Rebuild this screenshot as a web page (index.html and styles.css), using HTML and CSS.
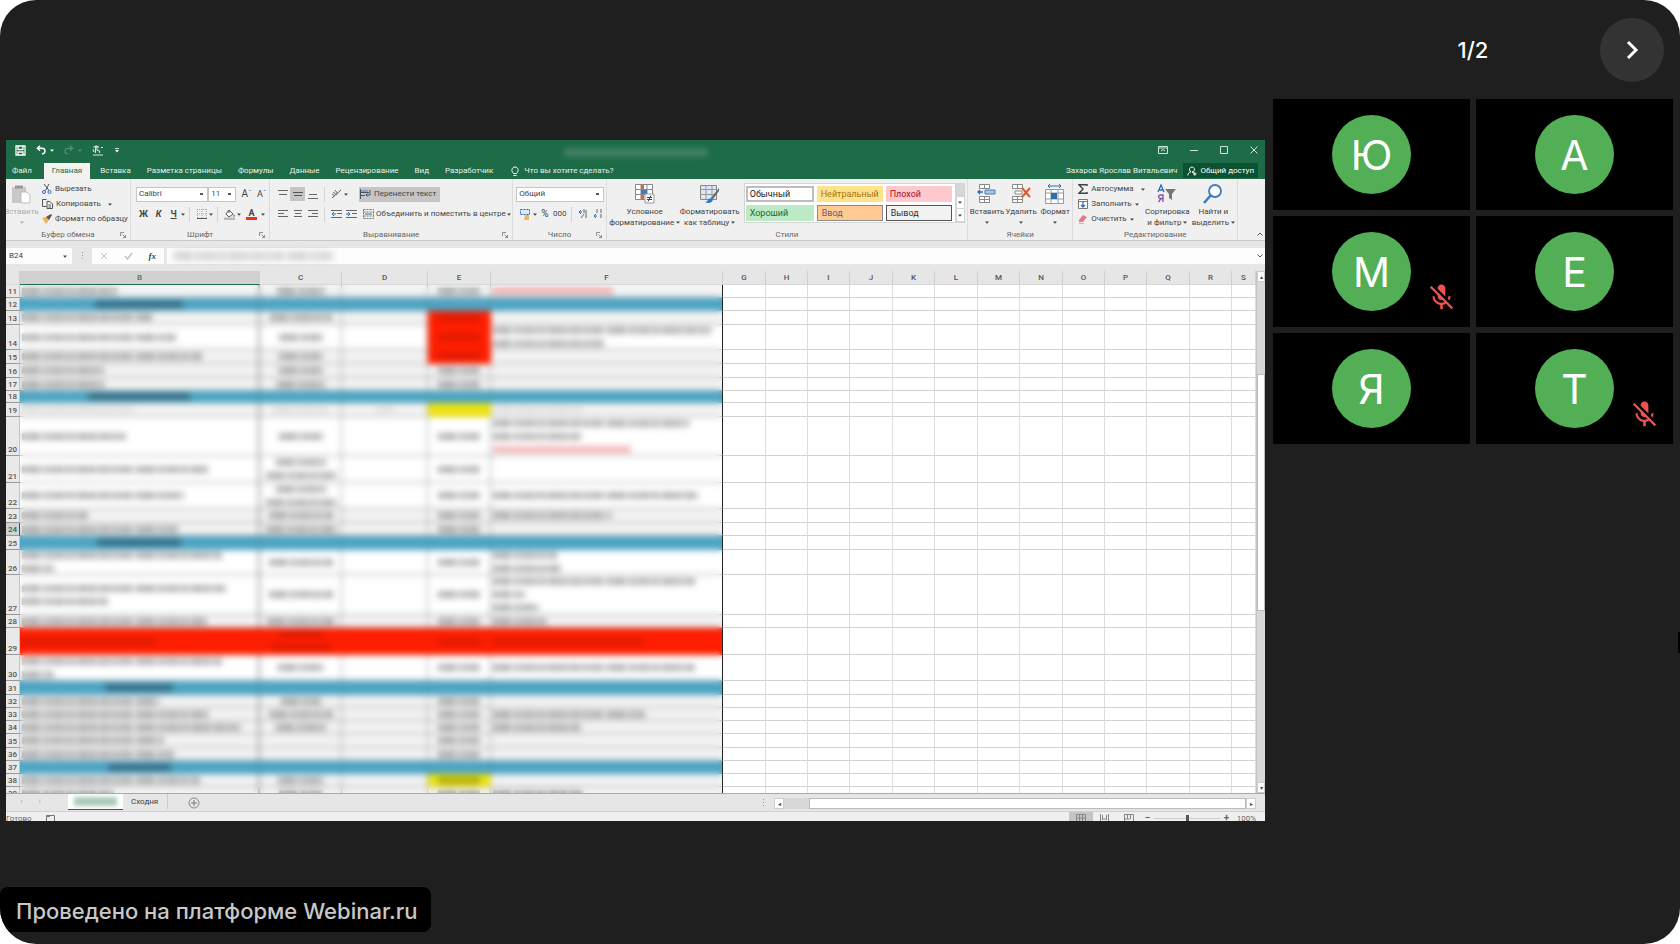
FILE: index.html
```
<!DOCTYPE html>
<html lang="ru">
<head>
<meta charset="utf-8">
<title>Webinar.ru</title>
<link rel="stylesheet" href="styles.css">
</head>
<body>
<svg class="defs" aria-hidden="true">
  <symbol id="mic-off" viewBox="0 0 24 24"><path d="M19 11h-1.7c0 .74-.16 1.43-.43 2.05l1.23 1.23c.56-.98.9-2.09.9-3.28zm-4.02.17c0-.06.02-.11.02-.17V5c0-1.66-1.34-3-3-3S9 3.34 9 5v.18l5.98 5.99zM4.27 3L3 4.27l6.01 6.01V11c0 1.66 1.33 3 2.99 3 .22 0 .44-.03.65-.08l1.66 1.66c-.71.33-1.5.52-2.31.52-2.76 0-5.3-2.1-5.3-5.1H5c0 3.41 2.72 6.23 6 6.72V21h2v-3.28c.91-.13 1.77-.45 2.54-.9L19.73 21 21 19.73 4.27 3z" fill="#f0524f"/></symbol>
  <symbol id="caret" viewBox="0 0 4 3"><path d="M0 .5h4L2 2.7z" fill="currentColor"/></symbol>
  <symbol id="launcher" viewBox="0 0 6 6"><path d="M.5 4V.5H4M2.500 2.500l3 3M5.500 3v2.500H3" fill="none" stroke="#777" stroke-width=".8"/></symbol>
</svg>
<div class="room">
  <header class="pager">
    <span></span>
    <span class="pager-count">1/2</span>
    <button class="pager-next" aria-label="Следующая страница"><svg width="14" height="20" viewBox="0 0 14 20"><path d="M3 2l8 8-8 8" fill="none" stroke="#fff" stroke-width="3"/></svg></button>
  </header>
  <main class="stage">
    <section class="share" aria-label="Демонстрация экрана">
      <div class="titlebar">
        <div class="quick">
          <button aria-label="Сохранить"><svg width="11" height="11" viewBox="0 0 11 11"><path d="M1 1h9v9H1zM3 1v3.500h5V1M3 10V7h5v3" fill="none" stroke="#fff" stroke-width="1.300"/></svg></button>
          <button class="wide" aria-label="Отменить"><svg width="10" height="10" viewBox="0 0 10 10"><path d="M4 .8L1.300 3.300 4 5.800M1.500 3.300H6c4 0 4 5.500 0 5.700" fill="none" stroke="#fff" stroke-width="1.400"/></svg><svg class="caret"><use href="#caret"/></svg></button>
          <button class="wide dim" aria-label="Вернуть"><svg width="10" height="10" viewBox="0 0 10 10"><path d="M6 .8l2.700 2.500L6 5.800M8.500 3.300H4c-4 0-4 5.500 0 5.700" fill="none" stroke="#fff" stroke-width="1.200"/></svg><svg class="caret"><use href="#caret"/></svg></button>
          <button class="wide" aria-label="Режим управления"><svg width="12" height="11" viewBox="0 0 12 11"><path d="M2 7L1 4.500M3.500 8V2.500c0-1 1.500-1 1.500 0V5l2.500 1v2M1 10h10M1.500 2.500C2.500.5 6 .5 7 2.500M9 2.500h2" fill="none" stroke="#d5e8dd" stroke-width="1.100"/></svg></button>
          <button aria-label="Настройка панели"><svg width="6" height="6" viewBox="0 0 6 6"><path d="M1 1.500h4" stroke="#fff" stroke-width=".8"/><path d="M1 3h4L3 5.500z" fill="#fff"/></svg></button>
        </div>
        <div class="doc-title"><i class="ink ink-light"></i></div>
        <div class="window-buttons">
          <button aria-label="Параметры ленты"><svg width="10" height="8" viewBox="0 0 10 8"><path d="M.5.5h9v7h-9zM1 2h8M3 5l2-1.500L7 5" fill="none" stroke="#cfe3d8"/></svg></button>
          <button aria-label="Свернуть"><svg width="8" height="8" viewBox="0 0 8 8"><path d="M0 4.500h8" stroke="#cfe3d8"/></svg></button>
          <button aria-label="Развернуть"><svg width="8" height="8" viewBox="0 0 8 8"><path d="M.5.5h7v7h-7z" fill="none" stroke="#cfe3d8"/></svg></button>
          <button aria-label="Закрыть"><svg width="8" height="8" viewBox="0 0 8 8"><path d="M.5.5l7 7M7.500.5l-7 7" stroke="#cfe3d8"/></svg></button>
        </div>
      </div>
      <nav class="tabs">
        <button>Файл</button><button class="active">Главная</button><button>Вставка</button><button>Разметка страницы</button><button>Формулы</button><button>Данные</button><button>Рецензирование</button><button>Вид</button><button>Разработчик</button>
        <button class="tell"><svg width="8" height="11" viewBox="0 0 8 11"><path d="M2.500 7.500C0 5.500.5 1 4 1s4 4.500 1.500 6.500zM2.500 9.500h3" fill="none" stroke="#fff"/></svg>Что вы хотите сделать?</button>
        <span class="user">Захаров Ярослав Витальевич</span>
        <button class="share-button"><svg width="10" height="10" viewBox="0 0 10 10"><path d="M5 6a2.500 2.500 0 1 0-1-.2C2 6.300 1 7.500.8 9.500M5 6l2 1M6 8h3.500M7.800 6.300v3.400" fill="none" stroke="#fff"/></svg>Общий доступ</button>
      </nav>
      <div class="ribbon">
        <div class="group g-clip">
          <div class="tools">
            <button class="big cut muted"><svg width="19" height="20" viewBox="0 0 19 20"><path d="M0 3h14v16H0z" fill="#c9c7c8"/><path d="M3 1.500h8v3H3z" fill="#999"/><path d="M9 8h6l3 3v8H9z" fill="#fff" stroke="#bbb"/></svg>Вставить<svg class="caret"><use href="#caret"/></svg></button>
            <div class="stack">
              <button><svg width="10" height="10" viewBox="0 0 10 10"><path d="M2 0l5 6.500M7 0L3.500 6.500" stroke="#555"/><circle cx="2" cy="8" r="1.500" fill="none" stroke="#2b6cb5"/><circle cx="7.500" cy="8" r="1.500" fill="none" stroke="#2b6cb5"/></svg>Вырезать</button>
              <button><svg width="11" height="10" viewBox="0 0 11 10"><path d="M4.500 7.500h-4v-7h4M5 2.500h3l2.500 2.500v4.500H5zM6.500 6H9M6.500 8H9" fill="none" stroke="#555"/></svg>Копировать<svg class="caret gap"><use href="#caret"/></svg></button>
              <button><svg width="10" height="10" viewBox="0 0 10 10"><path d="M0 4l4-1 3 3-3 4z" fill="#efb45a"/><path d="M4 3l5-3 1 1-3 5z" fill="#555"/></svg>Формат по образцу</button>
            </div>
          </div>
          <div class="caption">Буфер обмена<svg class="launch"><use href="#launcher"/></svg></div>
        </div>
        <div class="group g-font">
          <div class="tools rows">
            <div class="line">
              <select class="font-name" aria-label="Шрифт"><option>Calibri</option></select><select class="font-size" aria-label="Размер"><option>11</option></select>
              <button class="letter">A<sup>ˆ</sup></button><button class="letter small">A<sup>ˇ</sup></button>
            </div>
            <div class="line">
              <button class="bold">Ж</button><button class="italic">К</button><button class="under">Ч</button><svg class="caret"><use href="#caret"/></svg><i class="bar"></i>
              <button aria-label="Границы"><svg width="10" height="10" viewBox="0 0 10 10"><path d="M.5 0v9M5 0v9M9.500 0v9M0 .5h10M0 5h10" stroke="#aaa" stroke-dasharray="1 1"/><path d="M0 9.500h10" stroke="#555"/></svg></button><svg class="caret"><use href="#caret"/></svg><i class="bar"></i>
              <button aria-label="Заливка"><svg width="12" height="11" viewBox="0 0 12 11"><path d="M5 1l4 4-4 3-3-3zM5 1V4" fill="#fff" stroke="#555"/><path d="M10 5l1 2.500h-2z" fill="#2b6cb5"/><path d="M0 8.500h11V11H0z" fill="#bbb"/></svg></button><svg class="caret"><use href="#caret"/></svg>
              <button class="font-color" aria-label="Цвет текста">A</button><svg class="caret"><use href="#caret"/></svg>
            </div>
          </div>
          <div class="caption">Шрифт<svg class="launch"><use href="#launcher"/></svg></div>
        </div>
        <div class="group g-align">
          <div class="tools rows">
            <div class="line">
              <button class="al" aria-label="По верхнему краю"><svg width="10" height="10"><path d="M0 1.500h10M1 5.500h8" stroke="#666"/></svg></button><button class="al on" aria-label="По середине"><svg width="10" height="10"><path d="M0 3.500h10M1 6.500h8" stroke="#555"/></svg></button><button class="al" aria-label="По нижнему краю"><svg width="10" height="10"><path d="M1 5.500h8M0 9.500h10" stroke="#666"/></svg></button><i class="bar"></i>
              <button aria-label="Ориентация"><svg width="11" height="10" viewBox="0 0 11 10"><path d="M1 9l9-8M2 3l4 3M4 1l3 4M1 5l3 2" stroke="#666" fill="none"/></svg></button><svg class="caret"><use href="#caret"/></svg>
              <button class="wrap on"><svg width="11" height="10" viewBox="0 0 11 10"><path d="M0 1h8v3H0z" fill="#8aa2c0"/><path d="M.5 0v10M1 3.500h8M1 6.500h4M10 1v5H6l1.500-1.500M6 6l1.500 1.500" fill="none" stroke="#456"/></svg>Перенести текст</button>
            </div>
            <div class="line">
              <button class="al" aria-label="Слева"><svg width="10" height="10"><path d="M0 1.500h10M0 4.500h6M0 7.500h10" stroke="#666"/></svg></button><button class="al" aria-label="По центру"><svg width="10" height="10"><path d="M1 1.500h8M2 4.500h6M1 7.500h8" stroke="#666"/></svg></button><button class="al" aria-label="Справа"><svg width="10" height="10"><path d="M0 1.500h10M4 4.500h6M0 7.500h10" stroke="#666"/></svg></button><i class="bar"></i>
              <button class="al" aria-label="Уменьшить отступ"><svg width="11" height="10"><path d="M0 1.500h11M6 4.500h5M0 8.500h11" stroke="#666"/><path d="M5 5H1m2-2L1 5l2 2" stroke="#2b6cb5" fill="none"/></svg></button><button class="al" aria-label="Увеличить отступ"><svg width="11" height="10"><path d="M0 1.500h11M6 4.500h5M0 8.500h11" stroke="#666"/><path d="M0 5h4M2 3l2 2-2 2" stroke="#2b6cb5" fill="none"/></svg></button>
              <button class="merge"><svg width="11" height="10" viewBox="0 0 11 10"><path d="M.5.5h10v9H.5zM.5 3h10M.5 7h10" fill="none" stroke="#777" stroke-dasharray="2 1"/><path d="M2 5h7" stroke="#2b6cb5"/></svg>Объединить и поместить в центре</button><svg class="caret"><use href="#caret"/></svg>
            </div>
          </div>
          <div class="caption">Выравнивание<svg class="launch"><use href="#launcher"/></svg></div>
        </div>
        <div class="group g-number">
          <div class="tools rows">
            <div class="line"><select class="format" aria-label="Числовой формат"><option>Общий</option></select></div>
            <div class="line">
              <button aria-label="Финансовый формат"><svg width="12" height="11" viewBox="0 0 12 11"><path d="M.5.5h9v5h-9z" fill="#dce8f5" stroke="#2b6cb5" stroke-dasharray="2 1"/><path d="M5 6h4v5H4z" fill="#efb45a"/></svg></button><svg class="caret"><use href="#caret"/></svg><button class="pct">%</button><button class="tri">000</button><i class="bar"></i>
              <button aria-label="Увеличить разрядность"><svg width="10" height="10"><path d="M3 1L1 3l2 2M1 3h3" stroke="#2b6cb5" fill="none"/><path d="M6 0v4M8 1v8M3 9l3-4" stroke="#666"/></svg></button><button aria-label="Уменьшить разрядность"><svg width="10" height="10"><path d="M3 5L1 7l2 2M1 7h3" stroke="#2b6cb5" fill="none"/><path d="M4 0v4M8 0v4M8 5v4" stroke="#666"/></svg></button>
            </div>
          </div>
          <div class="caption">Число<svg class="launch"><use href="#launcher"/></svg></div>
        </div>
        <div class="group g-styles">
          <div class="tools">
            <button class="big two"><svg width="20" height="20" viewBox="0 0 20 20"><path d="M.5.5h17v15H.5zM.5 5.500h17M.5 10.500h17M6 .5v15M12 .5v15" fill="#fff" stroke="#888"/><path d="M6 1h3v4H6zM6 11h3v4H6z" fill="#e0663a"/><path d="M6 6h6v4H6z" fill="#3d7cc0"/><path d="M10 10h9v9h-9z" fill="#fff" stroke="#999"/><path d="M12 13.500h5M12 15.500h5M16 11.500l-3 6" stroke="#444"/></svg>Условное<span>форматирование<svg class="caret"><use href="#caret"/></svg></span></button>
            <button class="big two"><svg width="20" height="20" viewBox="0 0 20 20"><path d="M.5 1.500h16v14H.5z" fill="#dce8f5" stroke="#888"/><path d="M.5 5.500h16M.5 10.500h16M6 1.500v14M12 1.500v14" stroke="#999"/><path d="M19 4l-8 10 2 1 6-8z" fill="#666"/><path d="M11 14c-3 0-3 4-6 4 3 2 8 1 8-3z" fill="#2b7cd0"/></svg>Форматировать<span>как таблицу<svg class="caret"><use href="#caret"/></svg></span></button>
            <div class="gallery">
              <button class="s-normal">Обычный</button><button class="s-neutral">Нейтральный</button><button class="s-bad">Плохой</button>
              <button class="s-good">Хороший</button><button class="s-input">Ввод</button><button class="s-output">Вывод</button>
            </div>
            <div class="gallery-scroll"><button aria-label="Вверх" class="off"></button><button aria-label="Вниз"><svg class="caret"><use href="#caret"/></svg></button><button aria-label="Ещё"><svg class="caret"><use href="#caret"/></svg></button></div>
          </div>
          <div class="caption">Стили</div>
        </div>
        <div class="group g-cells">
          <div class="tools">
            <button class="big"><svg width="20" height="20" viewBox="0 0 20 20"><path d="M2.500.5h10v4h-10zM7.500.5v4M2.500 12.500h10v6h-10zM7.500 12.500v6M2.500 15.500h10" fill="#fff" stroke="#888"/><path d="M8 6h10v4H8z" fill="#a9c5e2" stroke="#4a7db5"/><path d="M6 8H1m2-2L1 8l2 2" fill="none" stroke="#2b6cb5" stroke-width="1.300"/></svg>Вставить<svg class="caret"><use href="#caret"/></svg></button>
            <button class="big"><svg width="20" height="20" viewBox="0 0 20 20"><path d="M1.500.5h10v4h-10zM6.500.5v4M1.500 12.500h10v6h-10zM6.500 12.500v6M1.500 15.500h10M4 7h7v3H4z" fill="#fff" stroke="#888"/><path d="M11 4l8 9M19 4l-8 9" stroke="#e0552e" stroke-width="2"/></svg>Удалить<svg class="caret"><use href="#caret"/></svg></button>
            <button class="big"><svg width="20" height="20" viewBox="0 0 20 20"><path d="M.5 5.500h18v14H.5zM.5 9h18M.5 15h18M6 5.500v14M13 5.500v14" fill="#fff" stroke="#999"/><path d="M6 9h6v6H6z" fill="#2b6cb5"/><path d="M3 2h13M5 0L3 2l2 2M14 0l2 2-2 2" fill="none" stroke="#2b6cb5"/></svg>Формат<svg class="caret"><use href="#caret"/></svg></button>
          </div>
          <div class="caption">Ячейки</div>
        </div>
        <div class="group g-edit">
          <div class="tools">
            <div class="stack">
              <button><svg width="10" height="10" viewBox="0 0 10 10"><path d="M9 2V.8H1L5 5 1 9.200h8V8" fill="none" stroke="#444" stroke-width="1.400"/></svg>Автосумма<svg class="caret gap"><use href="#caret"/></svg></button>
              <button><svg width="10" height="10" viewBox="0 0 10 10"><path d="M.5.5h9v9h-9zM.5 2.500h9" fill="#fff" stroke="#777"/><path d="M5 3v5M3 6l2 2 2-2" fill="none" stroke="#2b6cb5" stroke-width="1.300"/></svg>Заполнить<svg class="caret"><use href="#caret"/></svg></button>
              <button><svg width="10" height="10" viewBox="0 0 10 10"><path d="M5 1l4 2-4 5H1V6z" fill="#e8788a"/><path d="M1 9.500h5" stroke="#bbb"/></svg>Очистить<svg class="caret"><use href="#caret"/></svg></button>
            </div>
            <button class="big two"><svg width="20" height="20" viewBox="0 0 20 20"><path d="M1 8l3-7 3 7M2 6h4" fill="none" stroke="#2b6cb5" stroke-width="1.300"/><path d="M6 18v-7H3.500c-2.500 0-2.500 3.500 0 3.500H6M4 14.500L1.500 18" fill="none" stroke="#8b4bb0" stroke-width="1.300"/><path d="M8 5h11l-4 5v6l-3-2v-4z" fill="#777"/></svg>Сортировка<span>и фильтр<svg class="caret"><use href="#caret"/></svg></span></button>
            <button class="big two"><svg width="20" height="20" viewBox="0 0 20 20"><circle cx="12" cy="7" r="6" fill="#fff" stroke="#3d7cc0" stroke-width="1.800"/><path d="M8 11l-7 8" stroke="#3d7cc0" stroke-width="2.500"/></svg>Найти и<span>выделить<svg class="caret"><use href="#caret"/></svg></span></button>
          </div>
          <div class="caption">Редактирование</div>
        </div>
        <div class="group g-end"><button aria-label="Свернуть ленту"><svg width="6" height="4"><path d="M.5 3.500L3 1l2.500 2.500" fill="none" stroke="#555"/></svg></button></div>
      </div>
      <div class="formula">
        <div class="cell-name"><span>B24</span><svg class="caret"><use href="#caret"/></svg></div>
        <div class="dots"></div>
        <div class="formula-buttons"><button aria-label="Отмена"><svg width="8" height="8"><path d="M1 1l6 6M7 1L1 7" stroke="#bbb"/></svg></button><button aria-label="Ввод"><svg width="9" height="8"><path d="M1 4l2.500 3L8 1" fill="none" stroke="#bbb" stroke-width="1.300"/></svg></button><button class="fx">fx</button></div>
        <div class="formula-input"><i class="ink ink-formula"></i><svg width="6" height="4"><path d="M.5.5L3 3 5.500.5" fill="none" stroke="#555"/></svg></div>
      </div>
      <div class="sheet">
        <div class="grid-wrap">
          <table class="grid"><colgroup id="cols"></colgroup><thead><tr id="heads"></tr></thead><tbody id="rows"></tbody></table>
          <div class="veil"></div>
        </div>
        <div class="vscroll"><button aria-label="Вверх">▴</button><div class="vtrack"><div class="vthumb"></div></div><button aria-label="Вниз">▾</button></div>
      </div>
      <div class="sheet-tabs">
        <div class="sheet-nav"><span>‹</span><span>›</span></div>
        <button class="current" aria-label="Текущий лист"><i class="ink ink-green"></i></button><button class="other">Сходня</button>
        <button class="add" aria-label="Новый лист"><svg width="12" height="12"><circle cx="6" cy="6" r="5" fill="none" stroke="#888"/><path d="M3 6h6M6 3v6" stroke="#777"/></svg></button>
        <div class="dots push"></div>
        <div class="hscroll"><button aria-label="Влево">◂</button><div class="hthumb"></div><button aria-label="Вправо">▸</button></div>
      </div>
      <div class="status">
        <span class="ready">Готово</span><svg width="9" height="8"><path d="M.5 1.500h8v6h-8zM0 2.500h4" fill="none" stroke="#777"/></svg>
        <div class="views">
          <button class="on" aria-label="Обычный"><svg width="10" height="8"><path d="M.5.5h9v7h-9zM.5 4h9M3.500 0v8M6.500 0v8" fill="none" stroke="#888"/></svg></button><button aria-label="Разметка страницы"><svg width="9" height="8"><path d="M.5 0v8M8.500 0v8M3 5h3M2.500 1v5M6.500 1v5" stroke="#888"/></svg></button><button aria-label="Страничный"><svg width="10" height="8"><path d="M.5.5h9v7M.5 0v8M3.500 0v5M6.500 0v5M1 5h5" fill="none" stroke="#888"/></svg></button>
        </div>
        <button class="zoom-step">−</button><input type="range" class="zoom" aria-label="Масштаб" min="0" max="100" value="50"><button class="zoom-step">+</button><span class="zoom-value">100%</span>
      </div>
    </section>
    <section class="people" aria-label="Участники">
      <div class="tile"><span class="avatar">Ю</span></div>
      <div class="tile"><span class="avatar">А</span></div>
      <div class="tile"><span class="avatar">М</span><svg class="mic"><use href="#mic-off"/></svg></div>
      <div class="tile"><span class="avatar">Е</span></div>
      <div class="tile"><span class="avatar">Я</span></div>
      <div class="tile"><span class="avatar">Т</span><svg class="mic"><use href="#mic-off"/></svg></div>
    </section>
  </main>
  <footer class="badge">Проведено на платформе Webinar.ru</footer>
  <i class="edge-handle"></i>
</div>
<script src="sheet.js"></script>
</body>
</html>
```
FILE: styles.css
```
* { box-sizing: border-box; }
body { margin: 0; background: #fff; font-family: Inter, "Liberation Sans", sans-serif; }
button { border: 0; padding: 0; background: none; font: inherit; color: inherit; }
svg { flex: none; display: block; }
.defs { position: absolute; width: 0; height: 0; }
.caret { width: 4px; height: 3px; }

.room { position: relative; min-height: 100vh; display: flex; flex-direction: column; background: #1f1f1f; border-radius: 36px; overflow: hidden; }
.edge-handle { position: absolute; right: 0; top: 67%; width: 2px; height: 21px; background: #000; }
.pager { width: 400px; height: 99px; margin: 0 7px 0 auto; display: grid; grid-template-columns: 1fr 1fr 1fr; align-items: center; color: #fff; }
.pager-count { text-align: center; font-size: 22px; line-height: 28px; font-weight: 500; }
.pager-next { width: 64px; height: 64px; margin-right: 9px; justify-self: end; border-radius: 50%; background: #333; display: flex; align-items: center; justify-content: center; }
.stage { display: flex; align-items: flex-start; gap: 8px; padding: 0 7px 0 6px; }
.people { width: 400px; display: grid; grid-template-columns: 1fr 1fr; gap: 6px; }
.tile { height: 111px; background: #000; display: flex; align-items: center; justify-content: center; position: relative; }
.avatar { width: 79px; height: 79px; border-radius: 50%; background: #52af56; color: #fff; font-size: 41px; line-height: 81px; text-align: center; }
.mic { position: absolute; right: 13px; bottom: 14px; width: 31px; height: 31px; }
.badge { margin: auto auto 12px 0; height: 45px; padding: 0 14px 0 16px; border-radius: 8px; background: #000; color: #c8c8c8; font-size: 22px; line-height: 49px; font-weight: 500; }

/* shared screen */
.share { flex: 1; min-width: 0; margin-top: 41px; background: #e6e6e6; color: #444; font-family: Roboto, "Open Sans", sans-serif; font-size: 8px; line-height: 10px; overflow: hidden; white-space: nowrap; }
.ink { display: block; height: 7px; background: repeating-linear-gradient(90deg, #5558 0 3px, #9994 3px 7px, #6668 7px 18px, #aaa4 18px 23px), repeating-linear-gradient(90deg, #555a 0 17px, #aaa8 17px 21px, #777a 21px 54px, #fff 54px 57px); }
.titlebar { height: 23px; background: #1d6b47; color: #fff; display: grid; grid-template-columns: 1fr 1fr 1fr; align-items: center; padding: 0 7px 3px 9px; }
.quick { display: flex; align-items: center; gap: 10px; }
.quick button { display: flex; align-items: center; gap: 4px; }
.dim { opacity: .25; }
.doc-title { justify-self: center; margin-top: 4px; }
.ink-light { width: 144px; opacity: .35; filter: blur(3px); background: #9db8aa; }
.window-buttons { justify-self: end; display: flex; gap: 22px; align-items: center; }
.tabs { height: 16px; background: #1d6b47; color: #e8f2ec; display: flex; align-items: stretch; }
.tabs button { padding: 0 8px; }
.tabs button:first-child { padding: 0 12px 0 6px; }
.tabs .active { background: #f3f2f1; color: #1d6b47; margin-right: 2px; }
.tabs .tell { display: flex; align-items: center; gap: 5px; padding-left: 10px; }
.user { margin-left: auto; align-self: center; }
.tabs .share-button { display: flex; align-items: center; gap: 3px; padding: 0 4px; margin: 0 7px 1px 6px; background: #0c5132; color: #fff; }

.ribbon { display: flex; height: 62px; background: #f1f0f0; border-bottom: 1px solid #c8c8c8; }
.group { display: flex; flex-direction: column; min-width: 0; padding: 3px 0 0; border-right: 1px solid #dcdcdc; }
.g-clip { flex: 125 1 0; } .g-font { flex: 139 1 0; } .g-align { flex: 244 1 0; } .g-number { flex: 93 1 0; }
.g-styles { flex: 363 1 0; } .g-cells { flex: 105 1 0; } .g-edit { flex: 165 1 0; }
.g-end { flex: 25 1 0; border: 0; justify-content: flex-end; align-items: flex-end; padding: 0 2px 4px 0; }
.tools { display: flex; height: 48px; }
.caption { position: relative; text-align: center; color: #666; }
.launch { position: absolute; right: 4px; top: 2px; width: 6px; height: 6px; }
.tools.rows { flex-direction: column; padding: 4px 0 4px 5px; gap: 4px; }
.line { display: flex; align-items: center; height: 16px; }
.line button { display: flex; align-items: center; justify-content: center; min-width: 15px; height: 14px; }
.bar { width: 1px; height: 15px; background: #d4d4d4; margin: 0 4px; }
.stack { display: flex; flex-direction: column; gap: 5px; padding-top: 2px; }
.stack button { display: flex; align-items: center; gap: 3px; height: 10px; }
.caret.gap { margin-left: 4px; }
.big { display: flex; flex-direction: column; align-items: center; padding-top: 2px; line-height: 11px; }
.big > svg:first-child { margin-bottom: 2px; }
.big > .caret { margin-top: 4px; }
.big span { display: flex; align-items: center; gap: 2px; }
.cut { width: 31px; margin-right: 5px; color: #aaa; }
.on { background: #c6c4c4; }
select { appearance: none; height: 15px; border: 1px solid #c6c6c6; border-radius: 0; background: #fff linear-gradient(#555, #555) no-repeat right 4px center / 3px 2px; padding: 0 2px; font: inherit; color: #444; }
.font-name { width: 73px; } .font-size { width: 28px; margin-right: 3px; } .format { width: 88px; margin-left: -2px; }
.letter { font-size: 10px; } .letter sup { font-size: 8px; color: #2b6cb5; line-height: 4px; } .letter.small { font-size: 9px; }
.bold { font-weight: 700; } .italic { font-weight: 700; font-style: italic; } .under { font-weight: 700; text-decoration: underline; }
.bold, .italic, .under { font-size: 9px; }
.line .font-color { width: 11px; min-width: 11px; height: 12px; margin-left: 5px; margin-right: 4px; border-bottom: 3px solid #f2301c; font-weight: 700; font-size: 9px; }
.line .wrap { margin-left: 11px; padding: 0 4px 0 1px; gap: 3px; height: 15px; }
.line .merge { margin-left: 4px; gap: 2px; margin-right: 1px; }
.pct { font-size: 10px; }
.g-styles .big { width: 68px; } .g-styles .tools { padding-left: 4px; }
.g-styles .big:nth-child(2) { width: 62px; margin-right: 3px; }
.gallery { width: 212px; display: grid; grid-template-columns: 68px 66px 66px; gap: 3px; align-content: center; height: 40px; margin-top: 1px; background: #fff; padding: 1px; border: 1px solid #d4d4d4; font-size: 9px; }
.gallery button { height: 16px; padding-left: 4px; text-align: left; }
.gallery .s-normal { border: 2px solid #bdbdbd; color: #222; padding-left: 2px; } .s-neutral { background: #ffe28a; color: #a87414; } .s-bad { background: #ffc7ce; color: #a5121c; }
.s-good { background: #bdeac4; color: #1b6b24; } .s-input { background: #ffcb93; border: 1px solid #8a8a8a; color: #6b5a7d; } .s-output { background: #f2f2f2; border: 1px solid #555; color: #333; }
.gallery-scroll { width: 9px; height: 40px; margin-top: 1px; display: grid; grid-template-rows: 1fr 1fr 1fr; background: #fff; border: 1px solid #d4d4d4; }
.gallery-scroll button { display: flex; align-items: center; justify-content: center; border-bottom: 1px solid #d4d4d4; }
.gallery-scroll .off { background: #d6d6d6; }
.g-cells .tools { padding-left: 2px; } .g-cells .big { width: 34px; }
.g-edit .tools { padding-left: 5px; } .g-edit .stack { width: 66px; } .g-edit .big { width: 46px; }

.formula { display: flex; height: 16px; margin: 7px 0; }
.formula > div { background: #fdfdfd; display: flex; align-items: center; }
.cell-name { width: 66px; justify-content: space-between; padding: 0 5px 0 3px; }
.formula .dots { width: 20px; background: none; }
.dots::before { content: ""; display: block; width: 1px; height: 9px; margin: 0 auto; background: repeating-linear-gradient(#999 0 1px, transparent 1px 3px); }
.formula-buttons { width: 72px; justify-content: space-around; margin-right: 3px; }
.fx { font: italic 700 9px "Liberation Serif", serif; }
.formula-input { flex: 1; justify-content: space-between; padding: 0 2px 0 7px; }
.ink-formula { width: 160px; height: 10px; opacity: .3; filter: blur(3px); }

.sheet { display: flex; height: 523px; border-bottom: 1px solid #aaa; }
.grid-wrap { flex: 1; min-width: 0; position: relative; overflow: hidden; }
.grid { width: 100%; table-layout: fixed; border-collapse: separate; border-spacing: 0; }
.grid th { padding: 0; font-weight: 500; color: #555; overflow: hidden; }
.grid thead th { height: 14px; background: #e6e6e6; border-right: 1px solid #cfcfcf; border-bottom: 1px solid #d8d8d8; }
.grid thead .picked { background: #d2d1d1; color: #4b7a63; border-bottom: 1px solid #1d6b47; }
.grid tbody th { background: #e9e9e9; border-right: 1px solid #c4c4c4; border-bottom: 1px solid #999; vertical-align: bottom; }
.grid tbody .picked { background: #d2d1d1; color: #1d6b47; border-right-color: #1d6b47; }
.grid td { padding: 0; background: #fff; border-right: 1px solid #e0dce0; border-bottom: 1px solid #d2d2d2; overflow: hidden; }
.grid .data { border-color: #9a9a9a; padding: 0 2px; }
.grid .tight { background: #f3f3f3; }
.grid .col-B { border-right: 2px solid #999; }
.grid .col-F { border-right: 1px solid #222; }
.grid .head { background: #4ba5c4; border-color: #4592ad; }
.grid .red { background: #ff1e00; border-color: #f01c00; }
.grid .yellow { background: #ece312; border-color: #d8d012; }
.grid .head.col-F, .grid .red.col-F { border-right-color: #222; }
.data .ink { opacity: .6; }
.data .ink + .ink { margin-top: 6px; }
.col-C .ink, .col-D .ink, .col-E .ink, .head .ink { margin-left: auto; margin-right: auto; }
.data .strong { opacity: .65; background: #2b4d63; }
.data .faint { opacity: .15; }
.data .rose { background: #e88; }
.red .ink { background: #b01400; opacity: .4; }
.yellow .ink { background: #8a8600; }
.veil { position: absolute; top: 14px; bottom: 0; left: 14px; width: 702px; backdrop-filter: blur(3px); }
.vscroll { width: 9px; display: flex; flex-direction: column; background: #d9d8d9; border-left: 1px solid #c4c4c4; }
.vscroll button { height: 11px; background: #fff; font-size: 6px; line-height: 8px; border: 1px solid #ccc; }
.vtrack { flex: 1; padding-top: 92px; }
.vthumb { height: 237px; background: #fff; border: 1px solid #bbb; }

.sheet-tabs { display: flex; height: 18px; padding-right: 9px; border-bottom: 1px solid #d0d0d0; }
.sheet-nav { width: 62px; display: flex; gap: 16px; padding: 3px 0 0 14px; color: #aaa; }
.current { width: 55px; height: 16px; background: #fff; border-bottom: 1px solid #1d6b47; padding: 0 6px; }
.ink-green { height: 9px; background: #a9cbb8; filter: blur(2px); }
.other { padding: 0 9px 0 8px; font-size: 8px; border-right: 1px solid #ccc; margin-bottom: 2px; }
.add { margin-left: 20px; height: 17px; }
.push { margin-left: auto; padding-top: 5px; width: 21px; }
.hscroll { width: 482px; max-width: 40%; height: 11px; margin-top: 4px; display: flex; background: #d9d8d9; }
.hscroll button { width: 10px; background: #fff; font-size: 6px; line-height: 8px; border: 1px solid #ccc; }
.hthumb { flex: 1; margin-left: 25px; background: #fff; border: 1px solid #bbb; }
.status { display: flex; height: 9px; background: #f0eef0; overflow: hidden; padding: 2px 9px 0 0; color: #666; }
.ready { width: 40px; }
.views { margin: -2px 0 0 auto; display: flex; }
.views button { width: 24px; height: 10px; padding: 2px 7px 0; }
.zoom-step { width: 13px; font-size: 10px; line-height: 8px; font-weight: 700; }
.zoom { appearance: none; width: 66px; height: 8px; margin: 0; background: linear-gradient(#ccc, #ccc) no-repeat center / 100% 1px; }
.zoom::-webkit-slider-thumb { appearance: none; width: 3px; height: 7px; background: #555; }
.zoom-value { width: 23px; text-align: right; }
```
FILE: sheet.js
```
const columns = [["", 14], ["B", 240], ["C", 82], ["D", 86], ["E", 63], ["F", 232], ["G", 43], ["H", 42], ["I", 42], ["J", 43], ["K", 42], ["L", 43], ["M", 42], ["N", 43], ["O", 42], ["P", 42], ["Q", 43], ["R", 42], ["S", 24]];

// number, height, row kind, hidden text widths per column, options
const rows = [
  [11, 13, "", { B: [95], C: [48], E: [42], F: [120] }, { rose: 0 }],
  [12, 13, "head", { B: [88] }],
  [13, 14, "", { B: [130], C: [62], E: [42] }, { E: "red" }],
  [14, 25, "", { B: [154], C: [44], E: [42], F: [218, 112] }, { E: "red" }],
  [15, 14, "", { B: [180], C: [44], E: [42] }, { E: "red" }],
  [16, 14, "", { B: [82], C: [44], E: [42] }],
  [17, 13, "", { B: [82], C: [48], E: [42] }],
  [18, 12, "head", { B: [102] }],
  [19, 14, "", { B: [115], C: [56], D: [18], F: [90] }, { E: "yellow", faint: true }],
  [20, 39, "", { B: [104], C: [44], E: [42], F: [196, 88, 138] }, { rose: 2 }],
  [21, 27, "", { B: [186], C: [50, 70], E: [42] }],
  [22, 26, "", { B: [162], C: [50, 70], E: [42], F: [205] }],
  [23, 14, "", { B: [66], C: [64], E: [42], F: [118] }],
  [24, 13, "", { B: [156], C: [70], E: [42] }],
  [25, 14, "head", { B: [84] }],
  [26, 25, "", { B: [200, 32], C: [64], E: [42], F: [64, 68] }],
  [27, 40, "", { B: [204, 86], C: [64], E: [42], F: [202, 32, 46] }],
  [28, 13, "", { B: [185], C: [68], E: [42], F: [54] }],
  [29, 27, "red", { B: [133], C: [44, 60], E: [42], F: [150] }],
  [30, 26, "", { B: [200, 32], C: [46], E: [42], F: [202] }],
  [31, 14, "head", { B: [68] }],
  [32, 13, "", { B: [138], C: [40], E: [42] }],
  [33, 13, "", { B: [186], C: [64], E: [42], F: [152] }],
  [34, 13, "", { B: [218], C: [50], E: [42], F: [88] }],
  [35, 14, "", { B: [142], E: [42] }],
  [36, 13, "", { B: [152], E: [42] }],
  [37, 13, "head", { B: [63] }],
  [38, 13, "", { B: [178], C: [46], E: [42] }, { E: "yellow" }],
  [39, 13, "", { B: [92], C: [44], E: [42], F: [90] }]
];

const add = (parent, tag, className, text) => {
  const node = document.createElement(tag);
  if (className) node.className = className;
  if (text) node.textContent = text;
  parent.append(node);
  return node;
};

for (const [name, width] of columns) {
  add(document.getElementById("cols"), "col").style.width = width + "px";
  add(document.getElementById("heads"), "th", name === "B" ? "picked" : "", name);
}

for (const [number, height, kind, inks, options = {}] of rows) {
  const row = add(document.getElementById("rows"), "tr");
  row.style.height = height + "px";
  add(row, "th", number === 24 ? "picked" : "", String(number));
  for (const [name] of columns.slice(1)) {
    const filled = name <= "F";
    const tight = height < 15 ? "tight" : "";
    const cell = add(row, "td", filled ? `data col-${name} ${tight} ${kind} ${options[name] || ""}` : "");
    (inks[name] || []).forEach((width, index) => {
      const tone = kind === "head" ? "strong" : options.faint ? "faint" : name === "F" && options.rose === index ? "rose" : "";
      add(cell, "i", "ink " + tone).style.width = width + "px";
    });
  }
}
```
